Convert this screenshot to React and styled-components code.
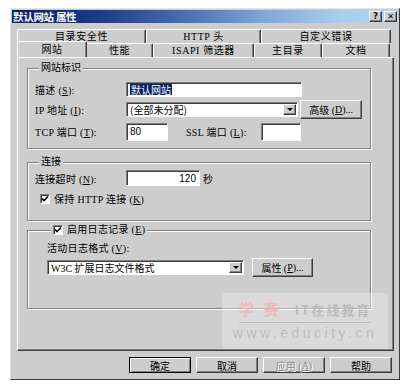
import React from 'react';
import styled, { createGlobalStyle, css } from 'styled-components';

const FACE = '#cdcdcd';
const SHADOW = '#808080';
const DARK = '#3c3c3c';

const Global = createGlobalStyle`
  html, body {
    margin: 0;
    background: #fff;
  }
  body {
    font-family: "Liberation Serif", "Noto Sans CJK SC", serif;
    font-size: 10px;
    color: #000;
  }
`;

const raised = css`
  border: 1px solid;
  border-color: #fff ${DARK} ${DARK} #fff;
  box-shadow: inset -1px -1px 0 ${SHADOW};
`;

const sunken = css`
  border: 1px solid;
  border-color: ${SHADOW} #fff #fff ${SHADOW};
  box-shadow: inset 1px 1px 0 ${DARK};
  background: #fff;
`;

const Dialog = styled.div`
  box-sizing: border-box;
  width: 390px;
  height: 372px;
  margin: 8px 0 0 10px;
  padding: 1px;
  background: ${FACE};
  border: 1px solid;
  border-color: #e6e6e6 ${DARK} ${DARK} #e6e6e6;
  display: flex;
  flex-direction: column;
`;

const TitleBar = styled.div`
  height: 13px;
  display: flex;
  align-items: center;
  justify-content: space-between;
  padding: 0 1px 0 1px;
  background: linear-gradient(90deg, #0a2066 0%, #1c3a86 22%, #4a6fb2 45%, #7fa6d8 65%, #a9cdef 85%, #b6d6f2 100%);
`;

const Title = styled.span`
  color: #fff;
  font-family: "Noto Sans CJK SC", sans-serif;
  font-weight: 700;
  font-size: 10.5px;
  line-height: 13px;
  letter-spacing: -0.3px;
`;

const Caps = styled.div`
  display: flex;
  gap: 2px;
`;

const CapBtn = styled.span`
  ${raised};
  box-sizing: border-box;
  width: 13px;
  height: 11px;
  background: ${FACE};
  display: flex;
  align-items: center;
  justify-content: center;
  font-family: "DejaVu Sans", sans-serif;
  font-weight: 700;
  font-size: 8px;
  line-height: 1;
`;

const Body = styled.div`
  flex: 1;
  display: flex;
  flex-direction: column;
  padding: 6px 4px 0 5px;
`;

const TabStack = styled.div`
  display: flex;
  flex-direction: column;
  width: 374px;
  position: relative;
  z-index: 1;
`;

const TabRow = styled.div`
  display: flex;
  height: 14px;
`;

const Tab = styled.div`
  box-sizing: border-box;
  width: ${p => p.w}px;
  display: flex;
  align-items: center;
  justify-content: center;
  background: ${FACE};
  border-top: 1px solid #fff;
  border-left: 1px solid #fff;
  border-right: 1px solid ${DARK};
  box-shadow: inset -1px 0 0 ${SHADOW};
  border-radius: 2px 2px 0 0;
  font-size: 10px;
  line-height: 12px;
  letter-spacing: 0.6px;
  white-space: pre;
  ${p => p.active && css`
    height: 16px;
    margin: -2px -1px -1px 0;
    position: relative;
    z-index: 2;
  `}
`;

const Panel = styled.div`
  box-sizing: border-box;
  position: relative;
  height: 294px;
  padding: 4px 22px 0 9px;
  border: 1px solid;
  border-color: #fff ${DARK} ${DARK} #fff;
  box-shadow: inset -1px -1px 0 ${SHADOW};
  display: flex;
  flex-direction: column;
`;

const Group = styled.fieldset`
  margin: ${p => p.top || 0}px 0 0 0;
  padding: ${p => p.pad};
  border: 1px solid ${SHADOW};
  box-shadow: inset 1px 1px 0 #fff, 1px 1px 0 #fff;
  min-width: 0;
  display: flex;
  flex-direction: column;
  gap: ${p => p.gap || 0}px;
`;

const Legend = styled.legend`
  margin-left: 4px;
  padding: 0 2px;
  background: ${FACE};
  line-height: 12px;
  font-size: 10px;
`;

const Row = styled.div`
  display: flex;
  align-items: center;
  height: ${p => p.h}px;
`;

const Label = styled.span`
  width: ${p => p.w ? `${p.w}px` : 'auto'};
  margin-left: ${p => p.ml || 0}px;
  flex-shrink: 0;
  white-space: pre;
  font-size: 10px;
  letter-spacing: 0.3px;
`;

const Key = styled.span`
  text-decoration: underline;
`;

const TextBox = styled.div`
  ${sunken};
  box-sizing: border-box;
  width: ${p => p.w}px;
  height: ${p => p.h || 15}px;
  padding: 0 3px;
  display: flex;
  align-items: center;
  justify-content: ${p => p.right ? 'flex-end' : 'flex-start'};
  font-family: "Liberation Sans", "Noto Sans CJK SC", sans-serif;
  font-size: 10px;
`;

const Selected = styled.span`
  background: #0a246a;
  color: #fff;
  font-family: "Noto Sans CJK SC", sans-serif;
  padding: 0 1px;
  line-height: 11px;
`;

const Combo = styled.div`
  ${sunken};
  box-sizing: border-box;
  width: ${p => p.w}px;
  height: 15px;
  padding: 0 1px 0 3px;
  display: flex;
  align-items: center;
  justify-content: space-between;
  font-size: 10px;
`;

const ComboText = styled.span`
  font-family: ${p => p.sans ? '"Noto Sans CJK SC", sans-serif' : 'inherit'};
  white-space: pre;
`;

const Arrow = styled.span`
  ${raised};
  box-sizing: border-box;
  width: 13px;
  height: 11px;
  background: ${FACE};
  display: flex;
  align-items: center;
  justify-content: center;
  &::after {
    content: '';
    border-left: 3px solid transparent;
    border-right: 3px solid transparent;
    border-top: 3px solid #000;
  }
`;

const Button = styled.div`
  ${raised};
  box-sizing: border-box;
  width: ${p => p.w}px;
  height: ${p => p.h || 19}px;
  margin-left: ${p => p.ml || 0}px;
  background: ${FACE};
  display: flex;
  align-items: center;
  justify-content: center;
  font-size: 10px;
  white-space: pre;
  ${p => p.def && css`
    border-color: #000;
    box-shadow: inset 1px 1px 0 #fff, inset -1px -1px 0 ${SHADOW};
  `}
  ${p => p.disabled && css`
    color: #8c8c8c;
    text-shadow: 1px 1px 0 #fff;
  `}
`;

const Unit = styled.span`
  margin-left: 3px;
  font-size: 10px;
`;

const CheckRow = styled.span`
  display: flex;
  align-items: center;
  gap: 4px;
  margin-left: ${p => p.ml || 0}px;
  font-size: 10px;
  white-space: pre;
  letter-spacing: 0.3px;
`;

const Box = styled.span`
  ${sunken};
  box-sizing: border-box;
  width: 10px;
  height: 10px;
  display: flex;
  align-items: center;
  justify-content: center;
`;

const ButtonBar = styled.div`
  display: flex;
  justify-content: flex-end;
  gap: 5px;
  margin-top: 6px;
  padding-right: 2px;
`;

const Watermark = styled.div`
  position: absolute;
  right: 5px;
  top: 235px;
  width: 166px;
  height: 56px;
  background: rgba(235, 235, 235, 0.45);
  display: flex;
  flex-direction: column;
  align-items: center;
  padding-top: 5px;
  box-sizing: border-box;
`;

const WmTop = styled.div`
  display: flex;
  align-items: baseline;
  gap: 6px;
  border-bottom: 1px solid #bdbdbd;
  padding-bottom: 3px;
`;

const WmBrand = styled.span`
  font-family: "Noto Sans CJK SC", sans-serif;
  font-weight: 700;
  font-size: 15px;
  letter-spacing: 10px;
  color: #efb9b9;
`;

const WmSlogan = styled.span`
  font-family: "Noto Sans CJK SC", sans-serif;
  font-weight: 700;
  font-size: 13px;
  letter-spacing: 2px;
  color: #bcbcbc;
`;

const WmUrl = styled.span`
  font-family: "Liberation Sans", sans-serif;
  font-size: 14px;
  letter-spacing: 3.5px;
  color: #bdbdbd;
  margin-top: 2px;
`;

const Check = () => (
  <Box>
    <svg width="8" height="8" viewBox="0 0 8 8">
      <path d="M1 3.5 L3 5.5 L7 1.5" stroke="#000" strokeWidth="1.6" fill="none" />
    </svg>
  </Box>
);

const topTabs = [
  { label: '目录安全性', w: 129 },
  { label: 'HTTP 头', w: 115 },
  { label: '自定义错误', w: 130 },
];

const frontTabs = [
  { label: '网站', w: 70, active: true },
  { label: '性能', w: 67 },
  { label: 'ISAPI 筛选器', w: 101 },
  { label: '主目录', w: 68 },
  { label: '文档', w: 68 },
];

export default function App() {
  return (
    <>
      <Global />
      <Dialog>
        <TitleBar>
          <Title>默认网站 属性</Title>
          <Caps>
            <CapBtn>?</CapBtn>
            <CapBtn>✕</CapBtn>
          </Caps>
        </TitleBar>
        <Body>
          <TabStack>
            <TabRow>
              {topTabs.map(t => <Tab key={t.label} w={t.w}>{t.label}</Tab>)}
            </TabRow>
            <TabRow>
              {frontTabs.map(t => <Tab key={t.label} w={t.w} active={t.active}>{t.label}</Tab>)}
            </TabRow>
          </TabStack>
          <Panel>
            <Group pad="8px 8px 7px 7px" gap={5}>
              <Legend>网站标识</Legend>
              <Row h={15}>
                <Label w={91}>描述 (<Key>S</Key>):</Label>
                <TextBox w={176}><Selected>默认网站</Selected></TextBox>
              </Row>
              <Row h={15}>
                <Label w={91}>IP 地址 (<Key>I</Key>):</Label>
                <Combo w={176}>
                  <ComboText sans>(全部未分配)</ComboText>
                  <Arrow />
                </Combo>
                <Button w={63} ml={2}>高级 (<Key>D</Key>)...</Button>
              </Row>
              <Row h={19}>
                <Label w={91}>TCP 端口 (<Key>T</Key>):</Label>
                <TextBox w={42} h={18}>80</TextBox>
                <Label w={75} ml={18}>SSL 端口 (<Key>L</Key>):</Label>
                <TextBox w={40} h={18} />
              </Row>
            </Group>

            <Group top={7} pad="2px 8px 14px 7px" gap={5}>
              <Legend>连接</Legend>
              <Row h={16}>
                <Label w={91}>连接超时 (<Key>N</Key>):</Label>
                <TextBox w={74} h={16} right>120</TextBox>
                <Unit>秒</Unit>
              </Row>
              <CheckRow ml={5}>
                <Check />
                <span>保持 HTTP 连接 (<Key>K</Key>)</span>
              </CheckRow>
            </Group>

            <Group top={3} pad="4px 8px 31px 19px" gap={3}>
              <Legend>
                <CheckRow>
                  <Check />
                  <span>启用日志记录 (<Key>E</Key>)</span>
                </CheckRow>
              </Legend>
              <Label>活动日志格式 (<Key>V</Key>):</Label>
              <Row h={19}>
                <Combo w={197}>
                  <ComboText>W3C 扩展日志文件格式</ComboText>
                  <Arrow />
                </Combo>
                <Button w={61} ml={8}>属性 (<Key>P</Key>)...</Button>
              </Row>
            </Group>

            <Watermark>
              <WmTop>
                <WmBrand>学赛</WmBrand>
                <WmSlogan>IT在线教育</WmSlogan>
              </WmTop>
              <WmUrl>www.educity.cn</WmUrl>
            </Watermark>
          </Panel>
          <ButtonBar>
            <Button w={62} h={16} def>确定</Button>
            <Button w={62} h={16}>取消</Button>
            <Button w={62} h={16} disabled>应用 (<Key>A</Key>)</Button>
            <Button w={62} h={16}>帮助</Button>
          </ButtonBar>
        </Body>
      </Dialog>
    </>
  );
}
